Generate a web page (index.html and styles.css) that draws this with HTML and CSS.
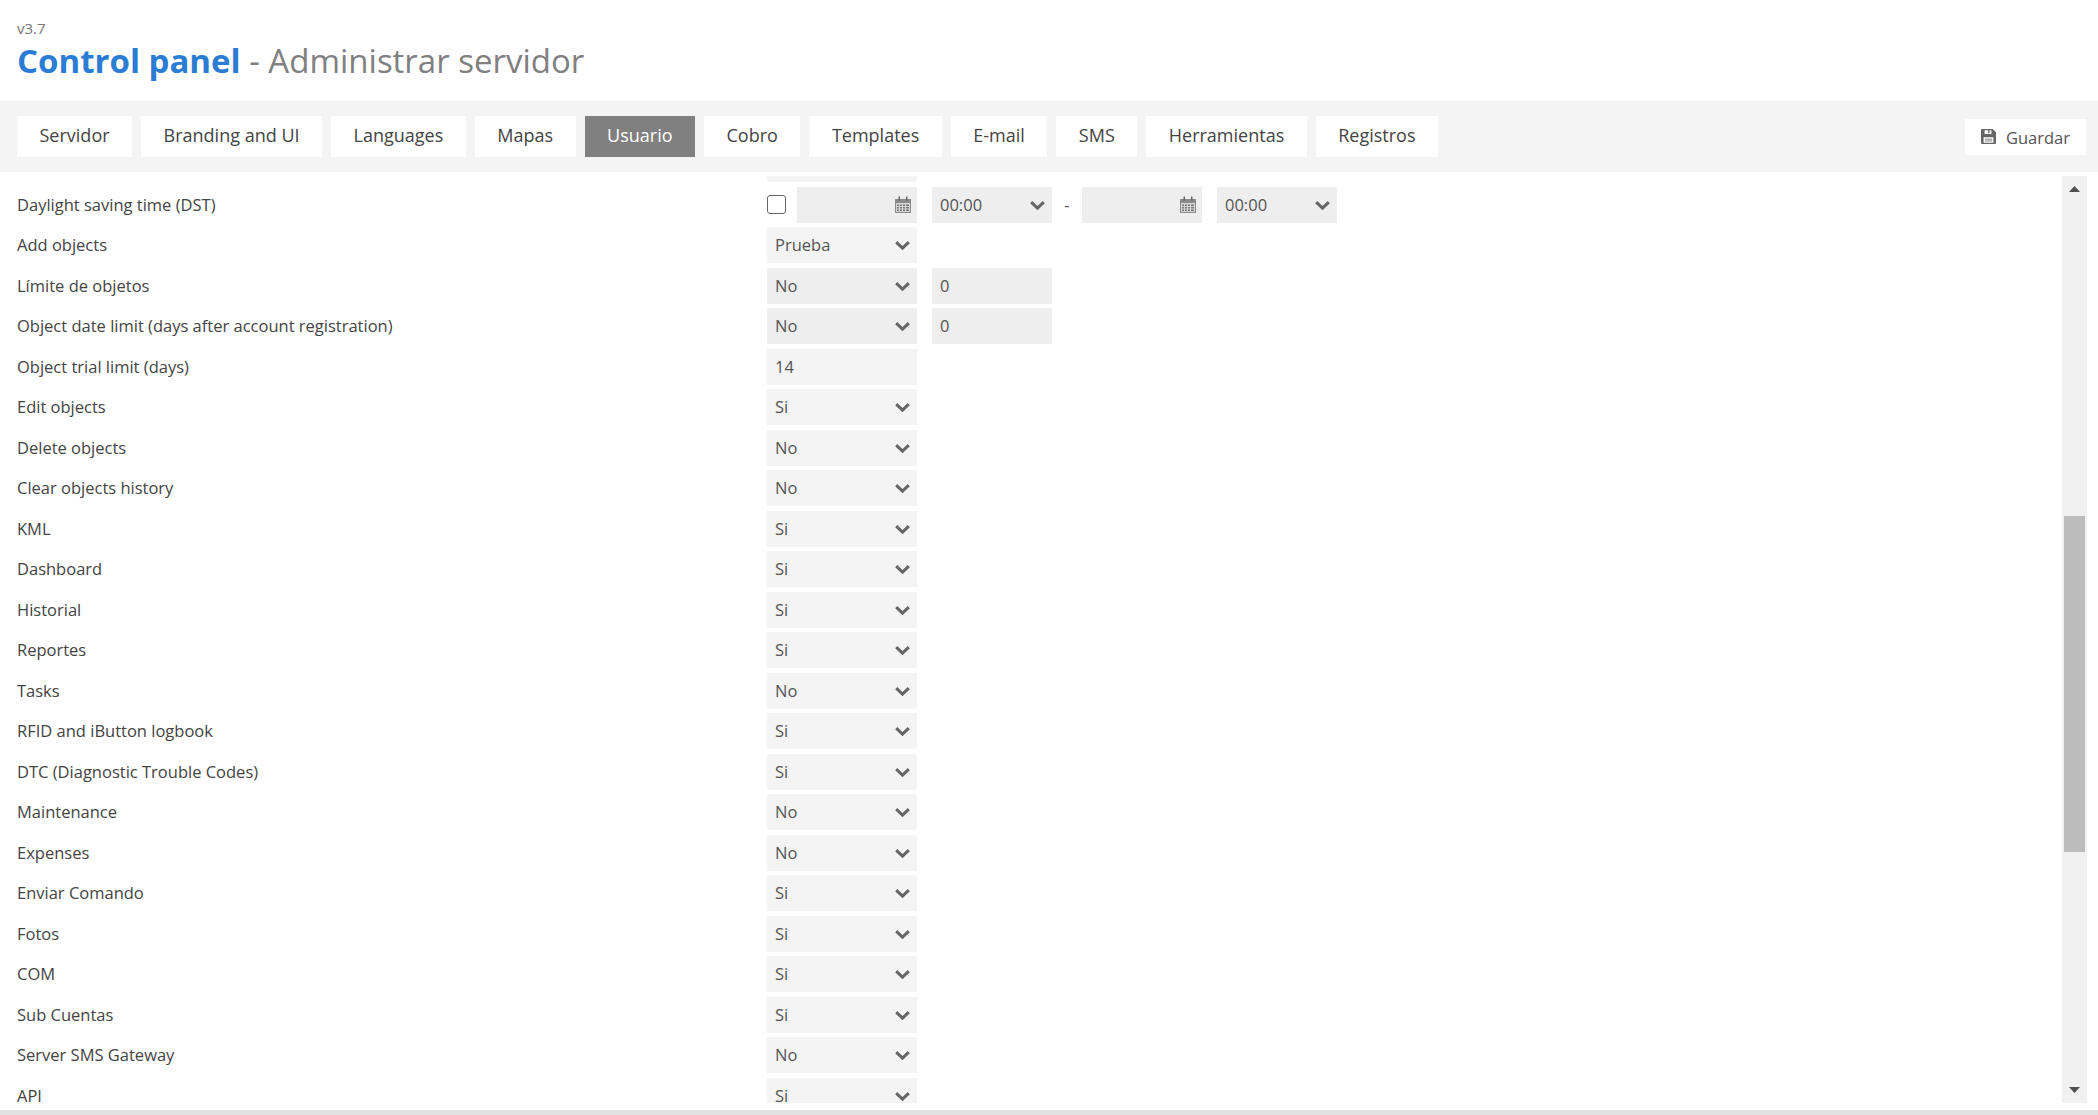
FILE: index.html
```html
<!DOCTYPE html>
<html lang="es">
<head>
<meta charset="utf-8">
<title>Control panel - Administrar servidor</title>
<link rel="stylesheet" href="styles.css">
</head>
<body>
<svg class="defs" width="0" height="0" aria-hidden="true">
  <symbol id="chev" viewBox="0 0 15 9"><path d="M1.2 1.2 7.5 7.2 13.8 1.2" fill="none" stroke="currentColor" stroke-width="3"/></symbol>
  <symbol id="cal" viewBox="0 0 16 17">
    <path d="M0 3h16v14H0z" fill="#8a8a8a"/>
    <path d="M1 7h14v9H1z" fill="#d8d8d8"/>
    <path d="M3.5 0.5h1.5v4H3.5zM11 0.5h1.5v4H11z" fill="#666"/>
    <path d="M2 8.5h2v1.6H2zM5 8.5h2v1.6H5zM8 8.5h2v1.6H8zM11 8.5h3v1.6h-3zM2 11h2v1.6H2zM5 11h2v1.6H5zM8 11h2v1.6H8zM11 11h3v1.6h-3zM2 13.5h2v1.6H2zM5 13.5h2v1.6H5zM8 13.5h2v1.6H8zM11 13.5h3v1.6h-3z" fill="#777"/>
  </symbol>
</svg>
<header class="head">
  <div class="version">v3.7</div>
  <h1 class="title"><b>Control panel</b> - Administrar servidor</h1>
</header>
<nav class="toolbar">
  <div class="tabs">
    <a class="tab">Servidor</a>
    <a class="tab">Branding and UI</a>
    <a class="tab">Languages</a>
    <a class="tab">Mapas</a>
    <a class="tab active">Usuario</a>
    <a class="tab">Cobro</a>
    <a class="tab">Templates</a>
    <a class="tab">E-mail</a>
    <a class="tab">SMS</a>
    <a class="tab">Herramientas</a>
    <a class="tab">Registros</a>
  </div>
  <a class="save">
    <svg class="save-icon" viewBox="0 0 15 15"><path fill-rule="evenodd" d="M1 0h10.6L15 3.2V14a1 1 0 0 1-1 1H1a1 1 0 0 1-1-1V1a1 1 0 0 1 1-1zM3.6 1.2v3.9h6.8V1.2H8.6v3H7.2v-3zM2.6 8.2v5.6h9.8V8.2z" fill="#666"/><path d="M3.8 9.8h7.4v.9H3.8zM3.8 11.6h7.4v.9H3.8z" fill="#888"/></svg>
    <span class="save-text">Guardar</span>
  </a>
</nav>
<main class="main">
  <div class="viewport">
    <div class="list">
      <div class="row"><div class="label"></div><div class="field"></div></div>
      <div class="row">
        <div class="label">Daylight saving time (DST)</div>
        <span class="check"></span>
        <div class="field date dark"><svg class="cal"><use href="#cal"/></svg></div>
        <div class="field small dark">00:00<svg class="chev"><use href="#chev"/></svg></div>
        <span class="dash">-</span>
        <div class="field date dark"><svg class="cal"><use href="#cal"/></svg></div>
        <div class="field small dark">00:00<svg class="chev"><use href="#chev"/></svg></div>
      </div>
      <div class="row"><div class="label">Add objects</div><div class="field">Prueba<svg class="chev"><use href="#chev"/></svg></div></div>
      <div class="row"><div class="label">Límite de objetos</div><div class="field dark">No<svg class="chev"><use href="#chev"/></svg></div><div class="field small dark">0</div></div>
      <div class="row"><div class="label">Object date limit (days after account registration)</div><div class="field dark">No<svg class="chev"><use href="#chev"/></svg></div><div class="field small dark">0</div></div>
      <div class="row"><div class="label">Object trial limit (days)</div><div class="field">14</div></div>
      <div class="row"><div class="label">Edit objects</div><div class="field">Si<svg class="chev"><use href="#chev"/></svg></div></div>
      <div class="row"><div class="label">Delete objects</div><div class="field">No<svg class="chev"><use href="#chev"/></svg></div></div>
      <div class="row"><div class="label">Clear objects history</div><div class="field">No<svg class="chev"><use href="#chev"/></svg></div></div>
      <div class="row"><div class="label">KML</div><div class="field">Si<svg class="chev"><use href="#chev"/></svg></div></div>
      <div class="row"><div class="label">Dashboard</div><div class="field">Si<svg class="chev"><use href="#chev"/></svg></div></div>
      <div class="row"><div class="label">Historial</div><div class="field">Si<svg class="chev"><use href="#chev"/></svg></div></div>
      <div class="row"><div class="label">Reportes</div><div class="field">Si<svg class="chev"><use href="#chev"/></svg></div></div>
      <div class="row"><div class="label">Tasks</div><div class="field">No<svg class="chev"><use href="#chev"/></svg></div></div>
      <div class="row"><div class="label">RFID and iButton logbook</div><div class="field">Si<svg class="chev"><use href="#chev"/></svg></div></div>
      <div class="row"><div class="label">DTC (Diagnostic Trouble Codes)</div><div class="field">Si<svg class="chev"><use href="#chev"/></svg></div></div>
      <div class="row"><div class="label">Maintenance</div><div class="field">No<svg class="chev"><use href="#chev"/></svg></div></div>
      <div class="row"><div class="label">Expenses</div><div class="field">No<svg class="chev"><use href="#chev"/></svg></div></div>
      <div class="row"><div class="label">Enviar Comando</div><div class="field">Si<svg class="chev"><use href="#chev"/></svg></div></div>
      <div class="row"><div class="label">Fotos</div><div class="field">Si<svg class="chev"><use href="#chev"/></svg></div></div>
      <div class="row"><div class="label">COM</div><div class="field">Si<svg class="chev"><use href="#chev"/></svg></div></div>
      <div class="row"><div class="label">Sub Cuentas</div><div class="field">Si<svg class="chev"><use href="#chev"/></svg></div></div>
      <div class="row"><div class="label">Server SMS Gateway</div><div class="field">No<svg class="chev"><use href="#chev"/></svg></div></div>
      <div class="row"><div class="label">API</div><div class="field">Si<svg class="chev"><use href="#chev"/></svg></div></div>
    </div>
  </div>
  <div class="scrollbar">
    <svg class="arrow" viewBox="0 0 11 6"><path d="M5.5 0 11 6H0z" fill="#505050"/></svg>
    <div class="thumb"></div>
    <svg class="arrow down" viewBox="0 0 11 6"><path d="M0 0h11L5.5 6z" fill="#505050"/></svg>
  </div>
</main>
<footer class="strip"></footer>
</body>
</html>
```

FILE: styles.css
```css
* { box-sizing: border-box; }
html, body { height: 100%; }
body {
  margin: 0;
  display: flex;
  flex-direction: column;
  height: 100vh;
  overflow: hidden;
  background: #fff;
  color: #444;
  font-family: "Open Sans", sans-serif;
  font-size: 16.5px;
}
.defs { position: absolute; }

.head { height: 101px; padding: 19px 17px 0; flex: none; }
.version { font-size: 15px; line-height: 18px; color: #777; }
.title { margin: 1px 0 0; font-size: 33px; line-height: 45px; font-weight: 400; color: #808080; }
.title b { font-weight: 700; color: #2b7cd3; }

.toolbar {
  flex: none;
  height: 71px;
  background: #f4f4f4;
  display: flex;
  align-items: center;
  justify-content: space-between;
  padding: 0 12px 0 17px;
}
.tabs { display: flex; gap: 9px; }
.tab {
  height: 41px;
  line-height: 39px;
  padding: 0 22.5px;
  background: #fff;
  font-size: 18px;
  color: #444;
}
.tab.active { background: #808080; color: #fff; }
.save {
  width: 121px;
  height: 36px;
  background: #fff;
  display: flex;
  align-items: center;
  padding-left: 16px;
  gap: 10px;
  color: #555;
}
.save-icon { width: 15px; height: 15px; }
.save-text { padding-top: 2px; }

.main {
  flex: 1;
  min-height: 0;
  display: flex;
  padding: 4px 11px 7px 17px;
}
.viewport { flex: 1; min-width: 0; overflow: hidden; }
.list { margin-top: -29.55px; }
.row { display: flex; align-items: center; height: 36px; margin-bottom: 4.5px; }
.label { width: 750px; height: 36px; line-height: 36px; flex: none; }
.field {
  position: relative;
  flex: none;
  width: 150px;
  height: 36px;
  line-height: 36px;
  padding-left: 8px;
  background: #f4f4f4;
  color: #555;
}
.field.dark { background: #eee; }
.field + .field { margin-left: 15px; }
.small, .field.small { width: 120px; }
.chev {
  position: absolute;
  right: 7px;
  top: 14px;
  width: 15px;
  height: 9px;
  color: #666;
}
.check {
  flex: none;
  width: 19px;
  height: 19px;
  margin-right: 11px;
  border: 1.5px solid #666;
  border-radius: 3px;
  background: #fff;
}
.date { width: 120px; }
.cal { position: absolute; right: 6px; top: 9px; width: 16px; height: 17px; }
.dash { flex: none; width: 30px; text-align: center; color: #555; }

.scrollbar {
  flex: none;
  width: 25px;
  background: #f1f1f1;
  display: flex;
  flex-direction: column;
  align-items: center;
}
.arrow { width: 11px; height: 6px; margin-top: 10px; flex: none; }
.arrow.down { margin: auto 0 10px; }
.thumb { width: 21px; height: 336px; margin-top: 324px; background: #bcbcbc; flex: none; }

.strip { flex: none; height: 5px; background: #e2e2e2; }
```
